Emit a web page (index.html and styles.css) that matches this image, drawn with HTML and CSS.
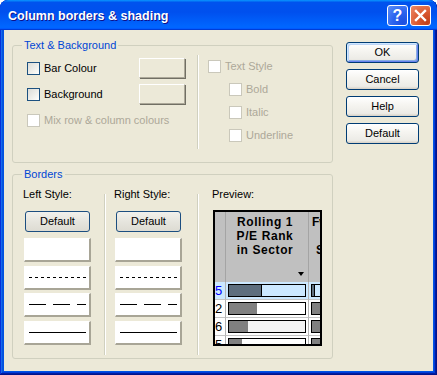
FILE: index.html
```html
<!DOCTYPE html>
<html>
<head>
<meta charset="utf-8">
<link rel="stylesheet" href="styles.css">
</head>
<body>
<div class="window">
  <div class="titlebar">
    <span class="title">Column borders &amp; shading</span>
    <div class="tb-buttons">
      <span class="tb-btn help">?</span>
      <span class="tb-btn close"><svg width="19" height="19" viewBox="0 0 19 19"><path d="M5 5 L14 14 M14 5 L5 14" stroke="#fff" stroke-width="2.4" stroke-linecap="square"/></svg></span>
    </div>
  </div>
  <div class="client">
    <div class="main">
      <fieldset class="group group-text">
        <legend>Text &amp; Background</legend>
        <div class="gt-inner">
          <div class="gt-left">
            <div class="opt-row"><span class="cb"></span><span class="lbl">Bar Colour</span><span class="colorbtn"></span></div>
            <div class="opt-row"><span class="cb"></span><span class="lbl">Background</span><span class="colorbtn"></span></div>
            <div class="opt-row disabled"><span class="cb"></span><span class="lbl">Mix row &amp; column colours</span></div>
          </div>
          <div class="vsep vsep-text"></div>
          <div class="gt-right">
            <div class="opt-row small disabled"><span class="cb"></span><span class="lbl">Text Style</span></div>
            <div class="opt-row small sub disabled"><span class="cb"></span><span class="lbl">Bold</span></div>
            <div class="opt-row small sub disabled"><span class="cb"></span><span class="lbl">Italic</span></div>
            <div class="opt-row small sub disabled"><span class="cb"></span><span class="lbl">Underline</span></div>
          </div>
        </div>
      </fieldset>
      <fieldset class="group group-borders">
        <legend>Borders</legend>
        <div class="gb-inner">
          <div class="style-col">
            <div class="col-label">Left Style:</div>
            <div class="btn toggle">Default</div>
            <div class="style-box"></div>
            <div class="style-box"><svg width="57" height="3"><line x1="0" y1="1.5" x2="57" y2="1.5" stroke="#000" stroke-width="1" stroke-dasharray="3 3"/></svg></div>
            <div class="style-box"><svg width="57" height="3"><line x1="0" y1="1.5" x2="57" y2="1.5" stroke="#000" stroke-width="1" stroke-dasharray="17 7"/></svg></div>
            <div class="style-box"><svg width="57" height="3"><line x1="0" y1="1.5" x2="57" y2="1.5" stroke="#000" stroke-width="1"/></svg></div>
          </div>
          <div class="vsep vsep-b1"></div>
          <div class="style-col">
            <div class="col-label">Right Style:</div>
            <div class="btn toggle">Default</div>
            <div class="style-box"></div>
            <div class="style-box"><svg width="57" height="3"><line x1="0" y1="1.5" x2="57" y2="1.5" stroke="#000" stroke-width="1" stroke-dasharray="3 3"/></svg></div>
            <div class="style-box"><svg width="57" height="3"><line x1="0" y1="1.5" x2="57" y2="1.5" stroke="#000" stroke-width="1" stroke-dasharray="17 7"/></svg></div>
            <div class="style-box"><svg width="57" height="3"><line x1="0" y1="1.5" x2="57" y2="1.5" stroke="#000" stroke-width="1"/></svg></div>
          </div>
          <div class="vsep vsep-b2"></div>
          <div class="preview-col">
            <div class="col-label">Preview:</div>
            <div class="preview">
              <div class="pc head num"></div>
              <div class="pc head main-col">
                <div class="head-text">Rolling 1<br>P/E Rank<br>in Sector</div>
                <span class="sort-arrow"></span>
              </div>
              <div class="pc head next-col">
                <div class="head-text2"><span class="h1">Fwd</span><br>&nbsp;<br><span class="h3">Sector</span></div>
              </div>

              <div class="pc num sel">5</div>
              <div class="pc sel"><div class="bar"><div class="fill fill-sel" style="width:33px"></div></div></div>
              <div class="pc sel"><div class="bar"><div class="fill fill-sel" style="width:3px"></div></div></div>

              <div class="pc num">2</div>
              <div class="pc"><div class="bar"><div class="fill" style="width:28px"></div></div></div>
              <div class="pc"><div class="bar"><div class="fill" style="width:60px"></div></div></div>

              <div class="pc num">6</div>
              <div class="pc"><div class="bar light"><div class="fill" style="width:19px"></div></div></div>
              <div class="pc"><div class="bar"><div class="fill" style="width:60px"></div></div></div>

              <div class="pc num">5</div>
              <div class="pc"><div class="bar"><div class="fill" style="width:13px"></div></div></div>
              <div class="pc"><div class="bar"><div class="fill" style="width:60px"></div></div></div>
            </div>
          </div>
        </div>
      </fieldset>
    </div>
    <div class="side">
      <div class="btn default-btn">OK</div>
      <div class="btn">Cancel</div>
      <div class="btn">Help</div>
      <div class="btn">Default</div>
    </div>
  </div>
</div>
</body>
</html>
```

FILE: styles.css
```css
* { box-sizing: border-box; }
html, body { margin: 0; padding: 0; background: #fff; }
body {
  font-family: "Liberation Sans", Arial, sans-serif;
  font-size: 11px;
  color: #000;
}

.window {
  width: 437px;
  height: 375px;
  display: flex;
  flex-direction: column;
  background: #0054e3;
  border-radius: 8px 8px 0 0;
  overflow: hidden;
  box-shadow: inset -1px -1px #00138c, inset 1px 1px #0831d9, inset -2px -2px #001ea0, inset 2px 2px #166aee, inset -3px -3px #003bda, inset 3px 3px #0855dd;
}

.titlebar {
  height: 30px;
  flex: none;
  display: flex;
  align-items: flex-start;
  padding: 0 6px 0 8px;
  border-radius: 8px 8px 0 0;
  background: linear-gradient(180deg, #0997ff, #0053ee 8%, #0050ee 40%, #06f 88%, #06f 93%, #005bff 95%, #003dd7 96%, #003dd7);
}
.title {
  margin-top: 8px;
  color: #fff;
  font-weight: bold;
  font-size: 12.5px;
  line-height: 16px;
  text-shadow: 1px 1px #0f1089;
}
.tb-buttons {
  margin-left: auto;
  margin-top: 5px;
  display: flex;
  gap: 2px;
}
.tb-btn {
  width: 21px;
  height: 21px;
  border: 1px solid #fff;
  border-radius: 3px;
  display: flex;
  align-items: center;
  justify-content: center;
}
.help {
  background: radial-gradient(circle at 80% 85%, #1c4fe0 0%, #2a63ef 45%, #5c8ff7 100%);
  color: #fff;
  font-weight: bold;
  font-size: 16px;
  font-family: "Liberation Sans", Arial, sans-serif;
  line-height: 19px;
}
.close {
  background: radial-gradient(circle at 85% 85%, #c2401a 0%, #da5a32 45%, #ee8a68 100%);
}

.client {
  flex: 1;
  margin: 0 4px 4px 4px;
  background: #ece9d8;
  display: flex;
  gap: 13px;
  padding: 8px 0 0 8px;
}

.main {
  width: 321px;
  display: flex;
  flex-direction: column;
  gap: 4px;
}

.group {
  margin: 0;
  padding: 0;
  border: 1px solid #d0d0bf;
  border-radius: 3px;
  min-width: 0;
}
.group legend {
  margin-left: 9px;
  padding: 0 2px;
  color: #0046d5;
  font-size: 11px;
  line-height: 14px;
}
.group-text { height: 125px; }
.group-borders { height: 192px; }

.gt-inner {
  display: flex;
  align-items: flex-start;
  padding: 0 0 0 14px;
}
.gt-left {
  width: 158px;
  display: flex;
  flex-direction: column;
  gap: 6px;
  padding-top: 6px;
}
.opt-row {
  display: flex;
  align-items: center;
  height: 20px;
  white-space: nowrap;
}
.opt-row.small { height: 13px; }
.opt-row.sub { margin-left: 21px; }
.cb {
  flex: none;
  width: 13px;
  height: 13px;
  margin-right: 4px;
  border: 1px solid #1c5180;
  background: linear-gradient(135deg, #dcdcd7 0%, #f4f4f0 70%, #fff 100%);
}
.disabled .cb {
  border-color: #cac8bb;
  background: #fff;
}
.disabled .lbl { color: #aca899; }
.lbl { line-height: 13px; }
.colorbtn {
  margin-left: auto;
  width: 46px;
  height: 20px;
  background: #ece9d8;
  border-top: 1px solid #fff;
  border-left: 1px solid #fff;
  border-right: 1px solid #aca899;
  border-bottom: 1px solid #aca899;
  box-shadow: 1px 1px 0 #716f64;
}

.vsep {
  flex: none;
  width: 2px;
  border-left: 1px solid #d0d0bf;
  border-right: 1px solid #fff;
}
.vsep-text { height: 94px; margin: 3px 9px 0 12px; }
.gt-right {
  display: flex;
  flex-direction: column;
  gap: 10px;
  padding-top: 8px;
}

.gb-inner {
  display: flex;
  padding: 7px 0 0 10px;
}
.style-col {
  width: 68px;
  flex: none;
  display: flex;
  flex-direction: column;
}
.col-label {
  line-height: 13px;
  height: 13px;
  white-space: nowrap;
}
.style-col .col-label { margin-bottom: 10px; }
.btn {
  height: 21px;
  border: 1px solid #003c74;
  border-radius: 3px;
  background: linear-gradient(180deg, #fff 0%, #f6f5f1 40%, #ecebe6 86%, #d6d0c5 100%);
  display: flex;
  align-items: center;
  justify-content: center;
  line-height: 13px;
}
.btn.toggle {
  width: 65px;
  margin-left: 2px;
  margin-bottom: 6px;
  background: linear-gradient(180deg, #f2f1ec 0%, #e6e5de 50%, #dddbd2 100%);
  border-color: #1c4e80;
}
.style-box {
  width: 67px;
  height: 24px;
  margin-left: 1px;
  margin-bottom: 3.5px;
  background: #fff;
  border-top: 1px solid #fff;
  border-left: 1px solid #fff;
  border-right: 2px solid #a8a596;
  border-bottom: 2px solid #a8a596;
  display: flex;
  align-items: center;
  padding-left: 4px;
}
.vsep-b1 { height: 161px; margin: 6px 8px 0 13px; }
.vsep-b2 { height: 161px; margin: 6px 13px 0 15px; }

.preview-col {
  display: flex;
  flex-direction: column;
}
.preview-col .col-label { margin-bottom: 9px; }
.preview {
  margin-left: 1px;
  width: 109px;
  height: 136px;
  border: 2px solid #000;
  background: #fff;
  overflow: hidden;
  display: grid;
  grid-template-columns: 11px 83px 60px;
  grid-template-rows: 70px repeat(4, 18px);
}
.pc {
  border-right: 1px solid #b4b4b4;
  border-bottom: 1px solid #c4c4c4;
  background: #fff;
  min-width: 0;
  overflow: hidden;
}
.pc.head {
  background: #c0c0c0;
  border-bottom: none;
  border-right-color: #a4a4a4;
}
.pc.sel { background: #cce8ff; }
.pc.num {
  font-size: 13px;
  line-height: 17px;
  padding-left: 0;
}
.pc.num.sel { color: #0000ff; }
.main-col {
  display: flex;
  flex-direction: column;
}
.head-text {
  padding-top: 3px;
  text-align: center;
  font-weight: bold;
  font-size: 12px;
  line-height: 14px;
  letter-spacing: 0.6px;
  padding-right: 4px;
}
.head-text2 {
  padding-top: 3px;
  font-weight: bold;
  font-size: 12px;
  line-height: 14px;
  white-space: nowrap;
}
.head-text2 .h1 { padding-left: 3px; }
.head-text2 .h3 { padding-left: 7px; }
.sort-arrow {
  margin-top: auto;
  align-self: flex-end;
  margin-right: 4px;
  margin-bottom: 6px;
  width: 0;
  height: 0;
  border-left: 3px solid transparent;
  border-right: 3px solid transparent;
  border-top: 4px solid #000;
}
.bar {
  width: 78px;
  height: 13px;
  margin: 2px 0 0 2px;
  border: 1px solid #000;
  background: #fff;
  display: flex;
}
.sel .bar { background: #cce8ff; }
.bar.light { background: #f4f4f4; }
.fill {
  height: 100%;
  background: #808080;
}
.fill.fill-sel { background: #5e6e7e; border-right: 1px solid #000; }

.side {
  width: 73px;
  display: flex;
  flex-direction: column;
  gap: 6px;
  padding-top: 4px;
}
.default-btn {
  box-shadow: inset 1px 1px 0 #cee7ff, inset -1px -1px 0 #6982ee, inset 2px 2px 0 #bcd4f6, inset -2px -2px 0 #89ade4;
}
```
